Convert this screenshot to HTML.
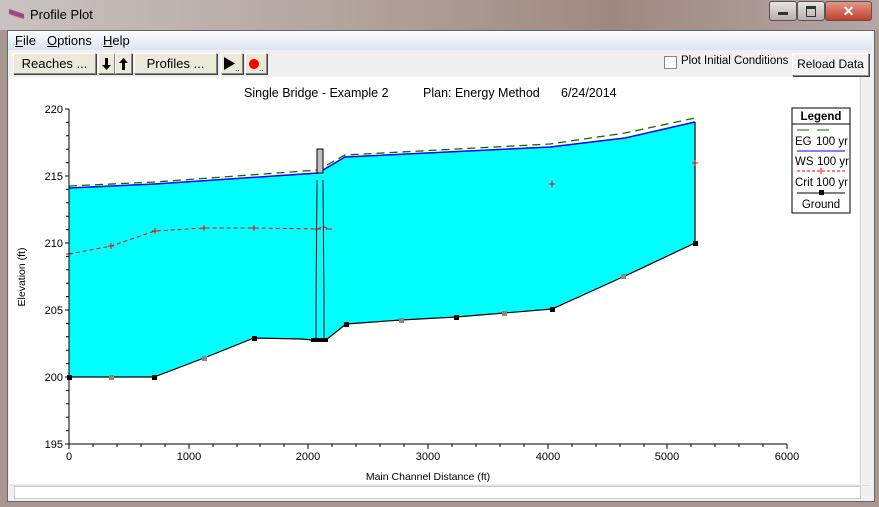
<!DOCTYPE html>
<html><head><meta charset="utf-8"><style>
body{margin:0;width:879px;height:507px;overflow:hidden;font-family:"Liberation Sans",sans-serif;font-size:12px;background:#a89690;position:relative}
.abs{position:absolute}
.title{left:0;top:0;width:879px;height:30px;background:linear-gradient(90deg,#c9c3c0,#b3a39d 40%,#9f8882 70%,#b5a7a3)}
.btn{position:absolute;background:#ece9d8;border:1px solid #888;border-top-color:#fff;border-left-color:#fff;box-shadow:1px 1px 0 #444;font-size:13px;text-align:center;line-height:19px;height:19px}
</style></head><body>
<div class="abs title"></div>
<svg class="abs" style="left:8px;top:8px" width="18" height="12"><path d="M1 2 L16 7 M1 5 L16 10" stroke="#d04060" stroke-width="2"/><path d="M1 3.5 L16 8.5" stroke="#4060d0" stroke-width="1.5"/></svg>
<div class="abs" style="left:30px;top:7px;font-size:13px;color:#000">Profile Plot</div>
<div class="abs" style="left:769px;top:1px;width:26px;height:18px;border:1px solid #555;border-radius:3px;background:linear-gradient(#e8e4e2,#b9afab)"><div class="abs" style="left:8px;top:10px;width:10px;height:3px;background:#333"></div></div>
<div class="abs" style="left:797px;top:1px;width:26px;height:18px;border:1px solid #555;border-radius:3px;background:linear-gradient(#e8e4e2,#b9afab)"><div class="abs" style="left:8px;top:4px;width:8px;height:7px;border:1px solid #333;border-top-width:3px"></div></div>
<div class="abs" style="left:825px;top:1px;width:45px;height:18px;border:1px solid #555;border-radius:3px;background:linear-gradient(#e0988a,#c2402b);color:#fff;font-weight:bold;text-align:center;font-size:14px;line-height:18px">✕</div>
<div class="abs" style="left:7px;top:30px;width:866px;height:470px;background:#f0f0f0;border:1px solid #666"></div>
<div class="abs" style="left:8px;top:31px;width:864px;height:19px;background:linear-gradient(#fcfcfe,#dbe4f1)"></div>
<div class="abs" style="left:15px;top:33px;font-size:13px"><u>F</u>ile</div>
<div class="abs" style="left:47px;top:33px;font-size:13px"><u>O</u>ptions</div>
<div class="abs" style="left:103px;top:33px;font-size:13px"><u>H</u>elp</div>
<div class="btn" style="left:13px;top:53px;width:81px">Reaches ...</div>
<div class="btn" style="left:98px;top:53px;width:15px"><svg width="15" height="19"><path d="M6 4h3v7h3l-4.5 5l-4.5-5h3z" fill="#000"/></svg></div>
<div class="btn" style="left:115px;top:53px;width:15px"><svg width="15" height="19"><path d="M6 16h3v-7h3l-4.5-5l-4.5 5h3z" fill="#000"/></svg></div>
<div class="btn" style="left:134px;top:53px;width:81px">Profiles ...</div>
<div class="btn" style="left:221px;top:53px;width:20px;text-align:left"><svg width="20" height="19"><path d="M2 3 L13 9.5 L2 16Z" fill="#000"/><text x="13" y="17" font-size="8">..</text></svg></div>
<div class="btn" style="left:245px;top:53px;width:20px;text-align:left"><svg width="20" height="19"><circle cx="8" cy="10" r="5" fill="#f00"/><text x="13" y="17" font-size="8">..</text></svg></div>
<div class="abs" style="left:664px;top:56px;width:11px;height:11px;border:1px solid #888;background:#fff"></div>
<div class="abs" style="left:681px;top:55px;font-size:11.5px">Plot Initial Conditions</div>
<div class="btn" style="left:792px;top:53px;width:75px;height:21px;line-height:21px;font-size:12px;background:#f2f2f2">Reload Data</div>
<div class="abs" style="left:9px;top:77px;width:850px;height:407px;background:#fff"></div>
<div class="abs" style="left:860px;top:77px;width:12px;height:407px;background:#f0f0f0;border-left:1px solid #ddd"></div>
<div class="abs" style="left:9px;top:485px;width:862px;height:13px;background:#f0f0f0;border-top:1px solid #ddd"></div>
<div class="abs" style="left:14px;top:486px;width:845px;height:11px;background:#fff;border:1px solid #ccc"></div>
<svg class="abs" style="left:0;top:0" width="879" height="507" font-family="Liberation Sans, sans-serif">
<text x="244" y="97" font-size="12.5">Single Bridge - Example 2</text>
<text x="423" y="97" font-size="12.5">Plan: Energy Method</text>
<text x="561" y="97" font-size="12.5">6/24/2014</text>
<polygon points="69,188 155,184 318,173 345,157 550,147 625,138 695,122 695,243 625,276 552,309 504,313 456,317 401,320 346,324 326,340 312,340 302,339 254,338 204,358 154,377 69,377" fill="#00ffff"/>
<polyline points="69,188 155,184 318,173 345,157 550,147 625,138 695,122" fill="none" stroke="#0000ff" stroke-width="1.5"/>
<polyline points="69,186 155,182 318,170 345,155 550,144 625,133 695,118" fill="none" stroke="#007000" stroke-width="1.3" stroke-dasharray="8,5"/>
<polyline points="69,377 154,377 204,358 254,338 302,339 312,340 326,340 346,324 401,320 456,317 504,313 552,309 625,276 695,243 695,122" fill="none" stroke="#000" stroke-width="1.2"/>
<rect x="317" y="149" width="6" height="24" fill="#c0c0c0" stroke="#000"/>
<path d="M316 340 V305 L317 180 M324 340 V305 L323 180" stroke="#000" fill="none"/>
<rect x="311" y="338" width="17" height="4" fill="#000"/>
<polyline points="69,254 111,246 155,231 204,228 254,228 318,229 323,226 328,229" fill="none" stroke="#f00" stroke-dasharray="4,3"/>
<g stroke="#f00"><path d="M66 254h6M69 251v6M108 246h6M111 243v6M152 231h6M155 228v6M201 228h6M204 225v6M251 228h6M254 225v6M549 184h6M552 181v6M692 163h6M695 160v6M315 229h6M326 229h6"/></g>
<g fill="#000"><rect x="67" y="375" width="5" height="5"/><rect x="152" y="375" width="5" height="5"/><rect x="252" y="336" width="5" height="5"/><rect x="344" y="322" width="5" height="5"/><rect x="454" y="315" width="5" height="5"/><rect x="550" y="307" width="5" height="5"/><rect x="693" y="241" width="5" height="5"/></g>
<g fill="#888"><rect x="109" y="375" width="5" height="5"/><rect x="202" y="356" width="5" height="5"/><rect x="399" y="318" width="5" height="5"/><rect x="502" y="311" width="5" height="5"/><rect x="621" y="274" width="5" height="5"/></g>
<path d="M69 109 V444 H787" stroke="#000" fill="none"/>
<g stroke="#000">
<path d="M65 109h4M65 176h4M65 243h4M65 310h4M65 377h4M65 444h4"/>
<path d="M66 122.4h3M66 135.8h3M66 149.2h3M66 162.6h3M66 189.4h3M66 202.8h3M66 216.2h3M66 229.6h3M66 256.4h3M66 269.8h3M66 283.2h3M66 296.6h3M66 323.4h3M66 336.8h3M66 350.2h3M66 363.6h3M66 390.4h3M66 403.8h3M66 417.2h3M66 430.6h3"/>
<path d="M69 444v5M189 444v5M308 444v5M428 444v5M548 444v5M667 444v5M787 444v5"/>
<path d="M93 444v3M117 444v3M141 444v3M165 444v3M213 444v3M237 444v3M260 444v3M284 444v3M332 444v3M356 444v3M380 444v3M404 444v3M452 444v3M476 444v3M500 444v3M524 444v3M572 444v3M596 444v3M620 444v3M644 444v3M691 444v3M715 444v3M739 444v3M763 444v3"/>
</g>
<g font-size="11" text-anchor="end"><text x="63" y="113">220</text><text x="63" y="180">215</text><text x="63" y="247">210</text><text x="63" y="314">205</text><text x="63" y="381">200</text><text x="63" y="448">195</text></g>
<g font-size="11" text-anchor="middle"><text x="69" y="460">0</text><text x="189" y="460">1000</text><text x="308" y="460">2000</text><text x="428" y="460">3000</text><text x="548" y="460">4000</text><text x="667" y="460">5000</text><text x="787" y="460">6000</text>
<text x="428" y="480" font-size="10.5">Main Channel Distance (ft)</text></g>
<text transform="translate(25,277) rotate(-90)" font-size="10.5" text-anchor="middle">Elevation (ft)</text>
<rect x="792" y="108" width="58" height="105" fill="#fff" stroke="#000"/>
<text x="821" y="120" font-size="11.5" font-weight="bold" text-anchor="middle">Legend</text>
<path d="M792 124h58" stroke="#000"/>
<path d="M797 130h12M817 130h12" stroke="#007000"/>
<text x="795" y="145" font-size="11.5">EG</text><text x="816" y="145" font-size="11.5">100 yr</text>
<path d="M797 151h48" stroke="#0000ff"/>
<text x="795" y="165" font-size="11.5">WS</text><text x="817" y="165" font-size="11.5">100 yr</text>
<path d="M797 171h48" stroke="#f00" stroke-dasharray="3,2"/><path d="M821 168v6" stroke="#f00"/>
<text x="795" y="186" font-size="11.5">Crit</text><text x="816" y="186" font-size="11.5">100 yr</text>
<path d="M797 193h48" stroke="#000"/><rect x="819" y="190" width="5" height="5"/>
<text x="821" y="208" font-size="11.5" text-anchor="middle">Ground</text>
</svg>
</body></html>
